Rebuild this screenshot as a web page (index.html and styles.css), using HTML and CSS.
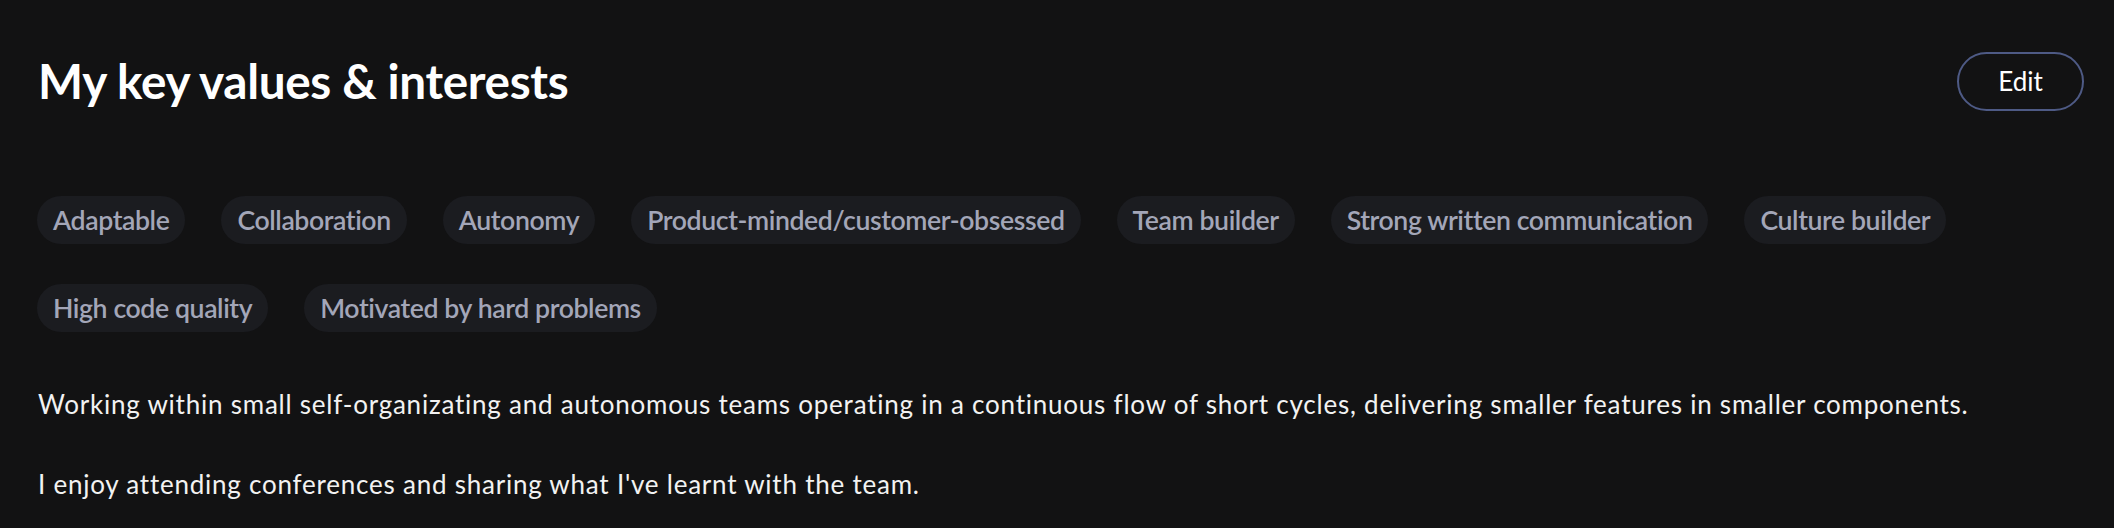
FILE: index.html
```html
<!DOCTYPE html>
<html lang="en">
<head>
<meta charset="utf-8">
<title>My key values &amp; interests</title>
<link rel="stylesheet" href="styles.css">
</head>
<body>
<section class="values">
  <header class="values-header">
    <h2 class="values-title">My key values &amp; interests</h2>
    <button class="edit-btn" type="button">Edit</button>
  </header>
  <ul class="chips">
    <li class="chip">Adaptable</li>
    <li class="chip">Collaboration</li>
    <li class="chip">Autonomy</li>
    <li class="chip">Product-minded/customer-obsessed</li>
    <li class="chip">Team builder</li>
    <li class="chip">Strong written communication</li>
    <li class="chip">Culture builder</li>
    <li class="chip">High code quality</li>
    <li class="chip">Motivated by hard problems</li>
  </ul>
  <div class="values-text">
    <p>Working within small self-organizating and autonomous teams operating in a continuous flow of short cycles, delivering smaller features in smaller components.</p>
    <p>I enjoy attending conferences and sharing what I've learnt with the team.</p>
  </div>
</section>
</body>
</html>
```
FILE: styles.css
```css
html, body {
  margin: 0;
  padding: 0;
  background: #121213;
}
body {
  font-family: Lato, "Noto Sans", sans-serif;
  color: #ffffff;
  font-variant-ligatures: none;
}
.values {
  padding: 51px 30px 0 38px;
}
.values-header {
  display: flex;
  justify-content: space-between;
  align-items: center;
  height: 60px;
}
.values-title {
  margin: 0;
  font-size: 47.7px;
  font-weight: 700;
  line-height: 60px;
  letter-spacing: -0.35px;
}
.edit-btn {
  font-family: inherit;
  font-size: 26px;
  color: #ffffff;
  background: transparent;
  border: 2px solid #4e5a85;
  border-radius: 30px;
  height: 59px;
  width: 127px;
  padding: 0;
  cursor: pointer;
}
.chips {
  list-style: none;
  margin: 85px 0 0 -1px;
  padding: 0;
  display: flex;
  flex-wrap: wrap;
  gap: 40px 36px;
  max-width: 2040px;
}
.chip {
  height: 48px;
  line-height: 48px;
  padding: 0 16px;
  border-radius: 24px;
  background: #1b1c20;
  color: #a3a6b8;
  font-size: 26.65px;
  font-weight: 600;
  letter-spacing: -0.4px;
  white-space: nowrap;
}
.values-text {
  margin-top: 52px;
}
.values-text p {
  margin: 0 0 40px;
  font-size: 26px;
  line-height: 40px;
  letter-spacing: 0.77px;
  color: #f2f2f2;
}
```
